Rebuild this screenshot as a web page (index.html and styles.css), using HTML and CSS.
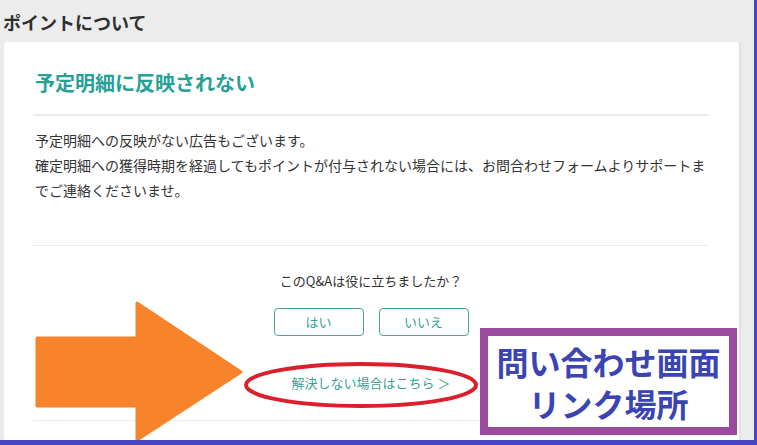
FILE: index.html
```html
<!DOCTYPE html>
<html lang="ja">
<head>
<meta charset="UTF-8" />
<title>ポイントについて</title>
<link rel="stylesheet" href="styles.css">
</head>
<body>
<div class="page">
	<div class="page-title">ポイントについて</div>

	<div class="card">
		<div class="card-title">予定明細に反映されない</div>
		<div class="card-body">
			予定明細への反映がない広告もございます。<br>
			確定明細への獲得時期を経過してもポイントが付与されない場合には、お問合わせフォームよりサポートまでご連絡くださいませ。
		</div>

		<div class="feedback">
			<div class="question">このQ&amp;Aは役に立ちましたか？</div>
			<div class="answers">
				<a class="answer" href="#">はい</a>
				<a class="answer" href="#">いいえ</a>
			</div>
			<a class="contact" href="#">解決しない場合はこちら ＞</a>
		</div>
	</div>

	<!-- annotations drawn over the screenshot -->
	<svg class="marks" width="757" height="445" viewBox="0 0 757 445">
		<polygon class="arrow" points="37,338 137,338 137,303 241,372 137,440 137,406 37,406" />
		<ellipse class="ring" cx="361" cy="385" rx="115" ry="21" />
	</svg>
	<div class="note">問い合わせ画面<br>リンク場所</div>
	<div class="frame"></div>
</div>
</body>
</html>
```

FILE: styles.css
```css
html, body { margin: 0; height: 445px; overflow: hidden; }

body { background: #ececec; color: #333333;
	font-family: "Noto Sans CJK JP", "Noto Sans", sans-serif; }

.page { position: relative; height: 445px; }

.page-title { font-size: 18px; font-weight: bold; line-height: 26px; padding: 9px 3px 7px; color: #2f2f2f; }

.card { margin-left: 4px; width: 676px; padding: 0 30px 0 29px; min-height: 420px;
	background: #ffffff; border-radius: 3px 3px 0 0; box-shadow: 2px 0 0 #e2e2e2; }

.card-title { font-size: 20px; font-weight: bold; line-height: 30px; color: #26a196;
	padding: 26px 2px 16px; border-bottom: 2px solid #ebebeb; }

.card-body { font-size: 14px; line-height: 25px; padding: 12px 0 42px 2px; border-bottom: 1px solid #ececec; }

.feedback { display: flex; flex-direction: column; align-items: center; padding: 25px 0 27px;
	border-bottom: 1px solid #ececec; }

.question { font-size: 13px; line-height: 20px; }

.answers { display: flex; gap: 15px; margin-top: 17px; }

.answer { width: 88px; height: 26px; line-height: 26px; text-align: center; font-size: 13px;
	color: #3a9f96; text-decoration: none; border: 1px solid #4aa59c; border-radius: 4px; }

.contact { margin-top: 37px; font-size: 13px; line-height: 20px; color: #3aa198; text-decoration: none; }

.marks { position: absolute; top: 0; left: 0; pointer-events: none; }
.marks .arrow { fill: #f7842a; stroke: #f7842a; stroke-width: 3; stroke-linejoin: round; }
.marks .ring { fill: none; stroke: #d9202c; stroke-width: 4; }

.note { position: absolute; left: 480px; top: 328px; width: 241px; height: 91px; border: 8px solid #9c4a9e;
	background: #ffffff; color: #3b44b3; font-size: 32px; font-weight: bold; line-height: 42px;
	text-align: center; display: flex; align-items: center; justify-content: center; }

.frame { position: absolute; top: 0; left: 0; right: 0; bottom: 0;
	border-right: 3px solid #4646c0; border-bottom: 5px solid #4646c0; pointer-events: none; }
```
